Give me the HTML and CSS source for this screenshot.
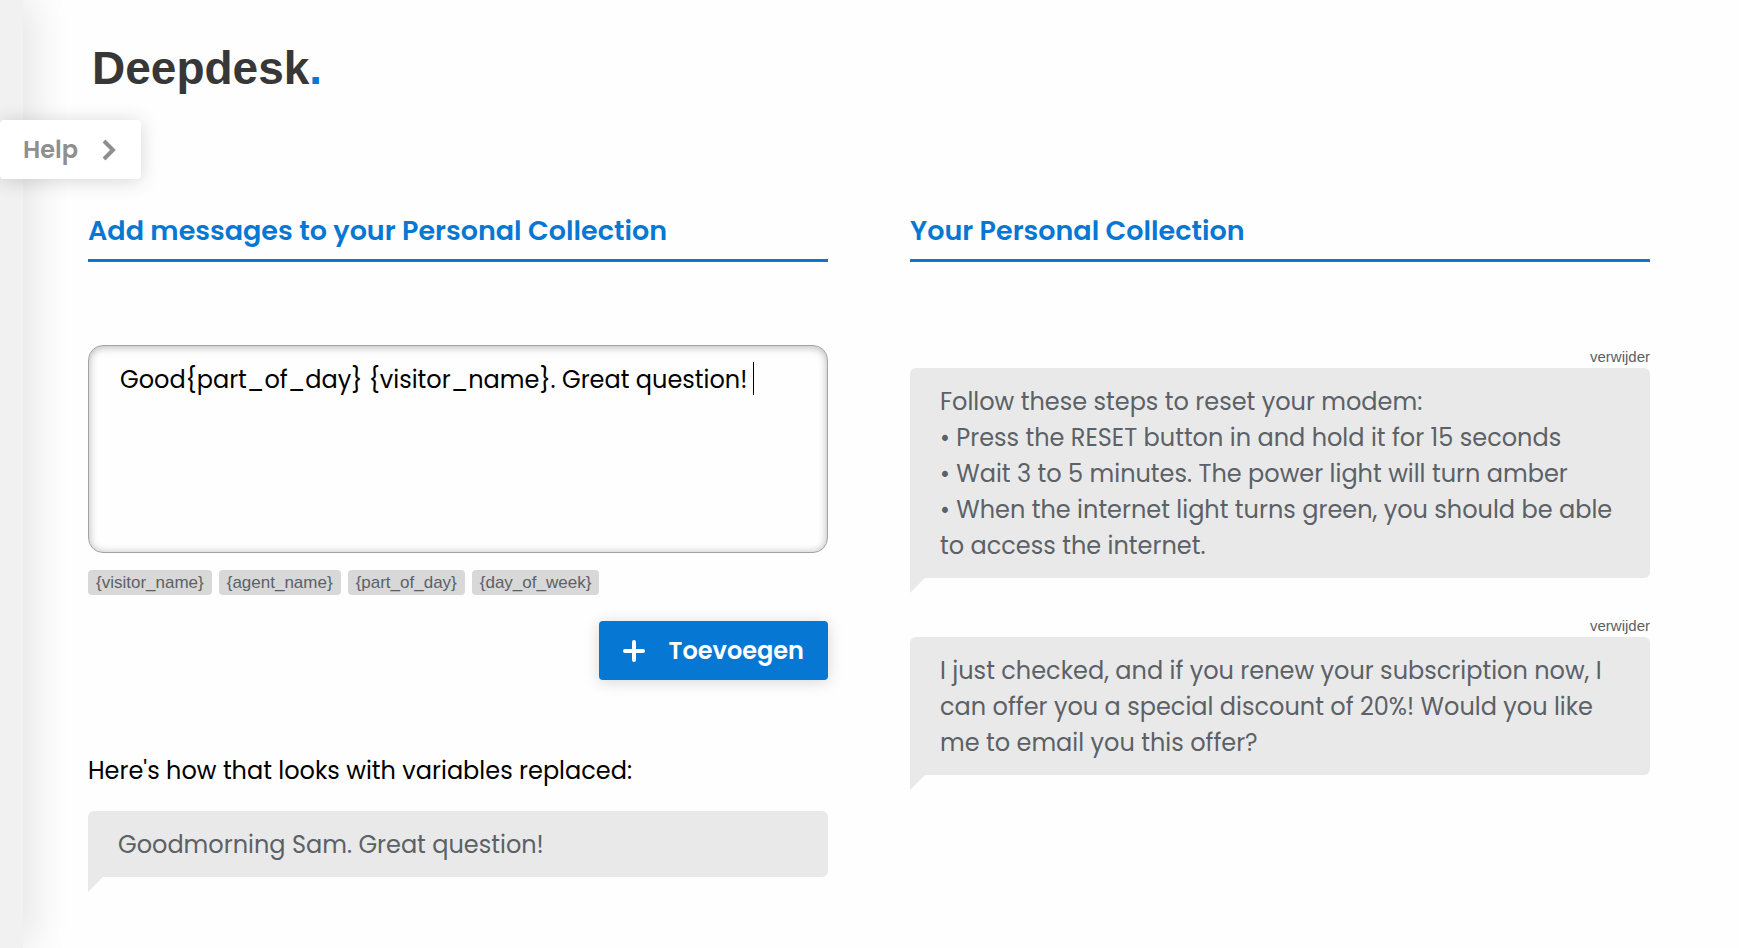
FILE: index.html
```
<!DOCTYPE html>
<html lang="en">
<head>
    <meta charset="UTF-8">
    <meta name="viewport" content="width=device-width, initial-scale=1">
    <title>Deepdesk</title>
    <link rel="stylesheet" href="styles.css">
</head>
<body>
<div class="page">
    <aside class="drawer">
        <button type="button" class="help-button">
            Help
            <svg class="help-icon" viewBox="0 0 14 22" aria-hidden="true">
                <path d="M2 2 L11 11 L2 20"/>
            </svg>
        </button>
    </aside>

    <main class="content">
        <header class="header">
            <div class="logo">Deepdesk<span class="logo-dot">.</span></div>
        </header>

        <div class="columns">
            <section class="column">
                <h2><label for="message">Add messages to your Personal Collection</label></h2>

                <form class="message-form">
                    <div class="editor">
                        <textarea id="message" spellcheck="false">Good{part_of_day} {visitor_name}. Great question! </textarea>
                        <span class="caret"></span>
                    </div>
                    <div class="variables">
                        <button type="button">{visitor_name}</button>
                        <button type="button">{agent_name}</button>
                        <button type="button">{part_of_day}</button>
                        <button type="button">{day_of_week}</button>
                    </div>
                    <button type="button" class="add-button">
                        <svg class="add-icon" viewBox="0 0 22 22" aria-hidden="true">
                            <path d="M11 2 V20 M2 11 H20"/>
                        </svg>
                        Toevoegen
                    </button>
                </form>

                <p class="preview-title">Here's how that looks with variables replaced:</p>
                <div class="bubble">Goodmorning Sam. Great question!</div>
            </section>

            <section class="column">
                <h2>Your Personal Collection</h2>

                <div class="messages">
                    <div class="message">
                        <button type="button" class="remove-button">verwijder</button>
                        <div class="bubble">Follow these steps to reset your modem:
• Press the RESET button in and hold it for 15 seconds
• Wait 3 to 5 minutes. The power light will turn amber
• When the internet light turns green, you should be able to access the internet.</div>
                    </div>
                    <div class="message">
                        <button type="button" class="remove-button">verwijder</button>
                        <div class="bubble">I just checked, and if you renew your subscription now, I can offer you a special discount of 20%! Would you like me to email you this offer?</div>
                    </div>
                </div>
            </section>
        </div>
    </main>
</div>
</body>
</html>
```

FILE: styles.css
```
* {
    box-sizing: border-box;
}

body {
    margin: 0;
    font-family: Poppins, Inter, sans-serif;
    font-size: 24px;
    line-height: 36px;
    color: #000;
    background-color: #fefefe;
}

button {
    border: none;
    font-family: inherit;
    cursor: pointer;
}

.page {
    display: flex;
    min-height: 100vh;
    overflow: hidden;
}

/* Collapsed help drawer on the left edge */
.drawer {
    position: relative;
    flex: 0 0 23px;
    background-color: #f1f1f1;
    box-shadow: 0 0 45px rgba(0, 0, 0, 0.2);
}

.help-button {
    position: absolute;
    top: 120px;
    left: 0;
    display: flex;
    align-items: center;
    gap: 24px;
    height: 59px;
    padding: 0 25px 0 23px;
    border-radius: 4px;
    font-size: 24px;
    font-weight: 600;
    color: #8f8f8f;
    background-color: #fff;
    box-shadow: 0 2px 20px rgba(0, 0, 0, 0.16);
}

.help-icon {
    width: 14px;
    height: 22px;
    fill: none;
    stroke: #8f8f8f;
    stroke-width: 4;
}

.content {
    flex: 1;
    min-width: 0;
    padding: 40px 89px 56px 65px;
}

.header {
    height: 168px;
    padding-left: 4px;
}

.logo {
    font-family: "Liberation Sans", Arial, sans-serif;
    font-size: 46px;
    font-weight: bold;
    line-height: 56px;
    color: #373737;
}

.logo-dot {
    color: #0678d4;
}

.columns {
    display: flex;
    gap: 82px;
}

.column {
    flex: 1;
    min-width: 0;
}

h2 {
    margin: 0;
    padding: 5px 0 10px;
    border-bottom: 3px solid #0678d4;
    font-size: 27px;
    font-weight: 600;
    line-height: 36px;
    color: #0678d4;
}

.message-form {
    display: flex;
    flex-direction: column;
    margin-top: 83px;
}

.editor {
    position: relative;
    display: flex;
}

textarea {
    width: 100%;
    height: 208px;
    padding: 16px 31px;
    border: 1px solid #a3a3a3;
    border-radius: 15px;
    outline: none;
    font: inherit;
    color: #000;
    background-color: #fefefe;
    box-shadow: inset 0 1px 8px rgba(0, 0, 0, 0.3);
    resize: none;
}

.caret {
    position: absolute;
    top: 17px;
    left: 665px;
    width: 1px;
    height: 33px;
    background-color: #000;
}

.variables {
    display: flex;
    gap: 7px;
    margin-top: 17px;
}

.variables button {
    padding: 0 8px;
    border-radius: 4px;
    font-family: "Liberation Sans", Arial, sans-serif;
    font-size: 17px;
    line-height: 25px;
    color: #5b6166;
    background-color: #d8d8d8;
}

.add-button {
    display: flex;
    align-items: center;
    align-self: flex-end;
    gap: 24px;
    height: 59px;
    margin-top: 26px;
    padding: 0 24px;
    border-radius: 4px;
    font-size: 24px;
    font-weight: 600;
    color: #fff;
    background-color: #0678d4;
    box-shadow: 0 2px 15px rgba(0, 0, 0, 0.16);
}

.add-icon {
    width: 22px;
    height: 22px;
    fill: none;
    stroke: #fff;
    stroke-width: 4;
    stroke-linecap: round;
}

.preview-title {
    margin: 73px 0 22px;
}

.bubble {
    position: relative;
    padding: 16px 30px 14px;
    border-radius: 6px 6px 6px 0;
    color: #5b6166;
    background-color: #e9e9e9;
    white-space: pre-wrap;
}

/* Speech bubble tail */
.bubble::after {
    content: "";
    position: absolute;
    top: 100%;
    left: 0;
    border-top: 15px solid #e9e9e9;
    border-right: 15px solid transparent;
}

.messages {
    display: flex;
    flex-direction: column;
    gap: 37px;
    margin-top: 84px;
}

.message {
    display: flex;
    flex-direction: column;
}

.remove-button {
    align-self: flex-end;
    padding: 0;
    font-family: "Liberation Sans", Arial, sans-serif;
    font-size: 15px;
    line-height: 22px;
    color: #5b6166;
    background: none;
}
```
